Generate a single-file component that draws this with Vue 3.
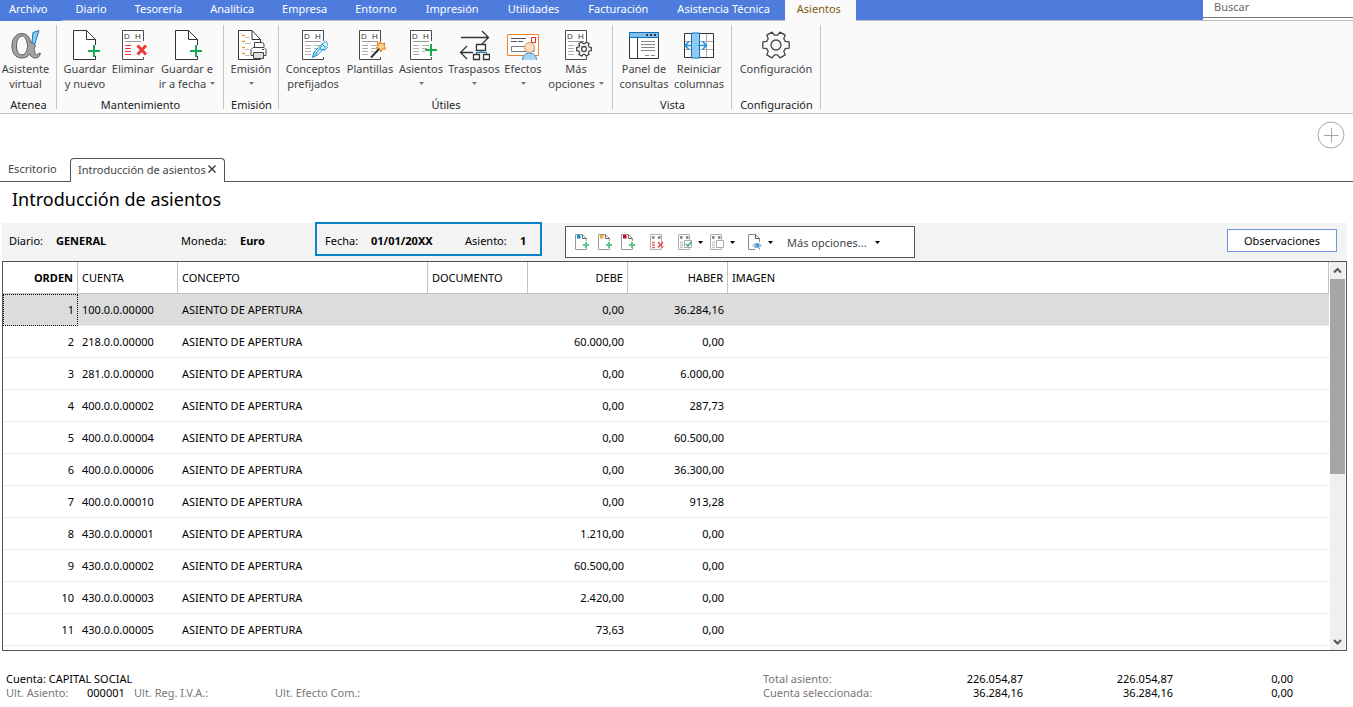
<script setup>
const menu = ['Archivo', 'Diario', 'Tesorería', 'Analítica', 'Empresa', 'Entorno', 'Impresión', 'Utilidades', 'Facturación', 'Asistencia Técnica', 'Asientos']

const groups = [
  { id: 'atenea', label: 'Atenea', items: [{ icon: 'alpha', lines: ['Asistente', 'virtual'] }] },
  { id: 'mantenimiento', label: 'Mantenimiento', items: [
    { icon: 'docplus', lines: ['Guardar', 'y nuevo'] },
    { icon: 'delete', lines: ['Eliminar'] },
    { icon: 'docplus', lines: ['Guardar e', 'ir a fecha'], caret: true },
  ] },
  { id: 'emision', label: 'Emisión', items: [{ icon: 'print', lines: ['Emisión', ''], caret: true }] },
  { id: 'utiles', label: 'Útiles', items: [
    { icon: 'pen', lines: ['Conceptos', 'prefijados'] },
    { icon: 'wand', lines: ['Plantillas'] },
    { icon: 'entry', lines: ['Asientos', ''], caret: true },
    { icon: 'transfer', lines: ['Traspasos', ''], caret: true },
    { icon: 'effects', lines: ['Efectos', ''], caret: true },
    { icon: 'more', lines: ['Más', 'opciones'], caret: true },
  ] },
  { id: 'vista', label: 'Vista', items: [
    { icon: 'panel', lines: ['Panel de', 'consultas'] },
    { icon: 'columns', lines: ['Reiniciar', 'columnas'] },
  ] },
  { id: 'config', label: 'Configuración', items: [{ icon: 'gear', lines: ['Configuración'] }] },
]

const ledger = ['delete', 'pen', 'wand', 'entry', 'more']

function gear(cx, cy, outer, inner) {
  const pts = []
  for (let i = 0; i < 6; i++) {
    const base = i * 60
    for (const [r, a] of [[inner, -21], [outer, -13], [outer, 13], [inner, 21]]) {
      const t = ((base + a) * Math.PI) / 180
      pts.push(`${(cx + r * Math.cos(t)).toFixed(2)} ${(cy + r * Math.sin(t)).toFixed(2)}`)
    }
  }
  return `M${pts.join('L')}Z`
}

const tools = [
  { kind: 'new', color: '#0a94dc', label: 'Nuevo apunte' },
  { kind: 'new', color: '#f5a623', label: 'Insertar apunte' },
  { kind: 'new', color: '#d0021b', label: 'Duplicar apunte' },
  { kind: 'remove', label: 'Borrar apunte' },
  { kind: 'check', label: 'Validar', caret: true },
  { kind: 'copy', label: 'Copiar', caret: true },
  { kind: 'view', label: 'Ver documento', caret: true },
]

const concept = 'ASIENTO DE APERTURA'
const rows = [
  ['100.0.0.00000', '0,00', '36.284,16'],
  ['218.0.0.00000', '60.000,00', '0,00'],
  ['281.0.0.00000', '0,00', '6.000,00'],
  ['400.0.0.00002', '0,00', '287,73'],
  ['400.0.0.00004', '0,00', '60.500,00'],
  ['400.0.0.00006', '0,00', '36.300,00'],
  ['400.0.0.00010', '0,00', '913,28'],
  ['430.0.0.00001', '1.210,00', '0,00'],
  ['430.0.0.00002', '60.500,00', '0,00'],
  ['430.0.0.00003', '2.420,00', '0,00'],
  ['430.0.0.00005', '73,63', '0,00'],
]
</script>

<template>
  <div class="app">
    <header class="topbar">
      <nav class="menu">
        <a v-for="m in menu" :key="m" href="#" :class="{ file: m === 'Archivo', current: m === 'Asientos' }">{{ m }}</a>
      </nav>
      <div class="search"><input type="text" placeholder="Buscar" aria-label="Buscar" /></div>
    </header>

    <section class="ribbon">
      <div v-for="g in groups" :key="g.id" class="group" :class="g.id">
        <div class="items">
          <button v-for="(it, i) in g.items" :key="i" type="button" class="item">
            <svg class="icon" width="32" height="32" viewBox="0 0 32 32" fill="none" aria-hidden="true">
              <g v-if="it.icon === 'alpha'">
                <path fill-rule="evenodd" d="M12 4.500C5.500 4.500 2 10 2 17C2 24 5.500 29 11.500 29C15.500 29 18 27.500 20 25C21 28 23 29 25.500 29C28 29 29.500 27.500 30.500 24.500L29 24C28.500 25.500 27.500 26 26.500 25.500C25 25 24.500 22.500 24 20L25.500 16.500L22 13L21 14C19.500 8 17 4.500 12 4.500ZM12.500 7C15.500 7 17 12 17.500 16.500C17.500 22 15 26 12 26C8.500 26 6.500 22 6.500 17C6.500 11 8.500 7 12.500 7Z" fill="#a3a3a3" stroke="#5a5a5a" />
                <path d="M23 3.500L29 1.500L24.500 16L22 13Z" fill="#8fcaf3" stroke="#1273b8" />
              </g>
              <g v-else-if="it.icon === 'docplus'">
                <path d="M26.500 16V10.500L17.500 1.500H4.500V30.500H26.500V27" fill="#fff" stroke="#333" />
                <path d="M17.500 1.500V10.500H26.500" stroke="#333" />
                <path d="M25 16V28M19 22H31" stroke="#18a950" stroke-width="2" />
              </g>
              <g v-else-if="ledger.includes(it.icon)">
                <path d="M26.500 12V1.500H5.500V30.500H26.500V28" fill="#fff" stroke="#4a4a4a" />
                <text class="letters" x="7" y="10">D</text>
                <text class="letters" x="18" y="10">H</text>
                <path d="M8 12.500H24" stroke="#999" />
                <path v-if="it.icon === 'delete'" d="M8 16.500H14M8 19.500H14M8 22.500H14M8 25.500H14" stroke="#e33" />
                <path v-else d="M8 16.500H14M8 19.500H14M8 22.500H14M8 25.500H14M17 16.500H24M17 19.500H22M17 22.500H20" stroke="#b0b0b0" />
                <path v-if="it.icon === 'delete'" d="M20.500 16.500L29 25.500M29 16.500L20.500 25.500" stroke="#ee3a3a" stroke-width="3" />
                <g v-else-if="it.icon === 'pen'" stroke="#1598d8">
                  <path d="M15.500 28.500L17 23L27 13.500C29 12 32 14 30 16.500L20.500 26Z" fill="#e4f5fd" />
                  <path d="M15.500 28.500L25 17M17 23L20.500 26M25 15L28 18M23 20L28 21L31 18" />
                </g>
                <g v-else-if="it.icon === 'wand'">
                  <path d="M17 28.500L25.500 19.500" stroke="#333" stroke-width="2" />
                  <path d="M26 12L28 15L31 14L30 17L32 20L28.500 20L27 23L25.500 19.500L22 19L24.500 17L23 13.500L26 15Z" fill="#fbd08b" stroke="#e87722" />
                </g>
                <path v-else-if="it.icon === 'entry'" d="M26 15V27M20 21H32" stroke="#18a950" stroke-width="2" />
                <g v-else>
                  <path :d="gear(24, 20, 7.5, 5.5)" fill="#fff" stroke="#444" stroke-width="1.3" stroke-linejoin="round" />
                  <circle cx="24" cy="20" r="2.500" stroke="#444" stroke-width="1.3" />
                </g>
              </g>
              <g v-else-if="it.icon === 'print'">
                <path d="M25.500 13V10.500L17 1.500H3.500V30.500H25.500" fill="#fff" stroke="#333" />
                <path d="M17 1.500V10.500H25.500" stroke="#333" />
                <path d="M7 6.500H10M7 12.500H10M7 18.500H10M7 24.500H10" stroke="#f39a1f" stroke-width="1.500" />
                <path d="M10 8.500H14M10 14.500H16M10 20.500H14M10 26.500H15" stroke="#bbb" />
                <path d="M19.500 18V13.500H27.500L29 15V18" fill="#fff" stroke="#444" />
                <path d="M18 18.500H29L31 20.500V26.500H16V20.500Z" fill="#fff" stroke="#444" />
                <path d="M18.500 23.500H28.500V29.500H18.500Z" fill="#ddd" stroke="#444" />
                <path d="M27 20.500H29" stroke="#444" />
              </g>
              <g v-else-if="it.icon === 'transfer'" stroke="#333">
                <path d="M3 8.500H30M24 2L30.500 8.500L24 15M15 23.500H2.500M9 17L2.500 23.500L9 30" stroke-width="1.3" />
                <path d="M18.500 23.500H28.500M23.500 21V23.500M18.500 23V26M28.500 23V26" stroke="#1d86cf" />
                <path d="M18.500 15.500H27.500V21.500H18.500ZM15.500 25.500H21.500V30.500H15.500ZM25.500 25.500H31.500V30.500H25.500Z" fill="#fff" stroke-width="1.3" />
              </g>
              <g v-else-if="it.icon === 'effects'">
                <path d="M.500 5.500H31.500V26.500H.500Z" fill="#fff" stroke="#ee8220" />
                <path d="M4 9.500H19M4 12.500H10M11 12.500H16" stroke="#555" />
                <path d="M24.500 8.500H28.500V13.500H24.500Z" stroke="#e22" />
                <path d="M4.500 17.500H27V22.500H4.500Z" stroke="#777" />
                <path d="M15.500 31C15.500 26 19 24 22.500 24S29.500 26 29.500 31" fill="#a8d3f2" stroke="#3a8fcc" />
                <circle cx="22.500" cy="18.500" r="5" fill="#fbdcbf" stroke="#c9986c" />
              </g>
              <g v-else-if="it.icon === 'panel'">
                <path d="M1.500 3.500H30.500V29.500H1.500Z" fill="#fff" stroke="#333" />
                <path d="M1.500 3.500H30.500V8.500H1.500Z" fill="#7fc0ef" stroke="#1370b5" />
                <path d="M9.500 9V29.500" stroke="#333" />
                <path d="M18 6H20M22 6H24M26 6H28" stroke="#333" stroke-width="2" />
                <path d="M13 12.500H27M13 15.500H27M13 18.500H27M13 21.500H27M17 26.500H21M23 26.500H27" stroke="#888" />
              </g>
              <g v-else-if="it.icon === 'columns'">
                <path d="M1.500 4.500H30.500V28.500H1.500Z" fill="#fff" stroke="#333" />
                <path d="M2 12.500H30M2 20.500H30M23.500 5V28" stroke="#aaa" />
                <path d="M8.500 4H16.500V29H8.500Z" fill="#8ecbf3" stroke="#1370b5" />
                <path d="M9 16.500H2.500M6 12.500L2 16.500L6 20.500M15 16.500H23M19.500 12.500L23.500 16.500L19.500 20.500" stroke="#1d8fd8" stroke-width="1.500" />
              </g>
              <g v-else stroke="#444" stroke-width="1.3" stroke-linejoin="round">
                <path :d="gear(16, 16, 13.5, 10)" />
                <circle cx="16" cy="16" r="5" />
              </g>
            </svg>
            <span v-for="(l, n) in it.lines" :key="n" class="line">{{ l }}<svg v-if="it.caret && n === 1" class="caret" width="5" height="3" viewBox="0 0 5 3" aria-hidden="true"><path d="M0 0H5L2.500 3Z" fill="#777" /></svg></span>
          </button>
        </div>
        <div class="glabel">{{ g.label }}</div>
      </div>
    </section>

    <div class="tabs">
      <a href="#" class="tab">Escritorio</a>
      <div class="tab active">
        <a href="#">Introducción de asientos</a>
        <button type="button" aria-label="Cerrar pestaña"><svg width="8" height="8" viewBox="0 0 8 8"><path d="M.500 .500L7.500 7.500M7.500 .500L.500 7.500" stroke="#333" stroke-width="1.400" /></svg></button>
      </div>
      <button type="button" class="add" aria-label="Añadir pestaña"><svg width="28" height="28" viewBox="0 0 28 28" fill="none" stroke="#a8a8a8"><circle cx="14" cy="14" r="13" /><path d="M14.500 7V21.500M7 14.500H21.500" /></svg></button>
    </div>

    <main>
      <h1>Introducción de asientos</h1>
      <div class="bar">
        <div class="fields">
          <span>Diario:</span><b>GENERAL</b><span>Moneda:</span><b>Euro</b>
        </div>
        <div class="datebox">
          <span>Fecha:</span><b>01/01/20XX</b><span>Asiento:</span><b>1</b>
        </div>
        <div class="tools">
          <button v-for="t in tools" :key="t.label" type="button" :aria-label="t.label">
            <svg width="16" height="18" viewBox="0 0 16 18" fill="none" aria-hidden="true">
              <g v-if="t.kind === 'new'">
                <path d="M12.500 8V5.500L8.500 1.500H1.500V16.500H12.500V15" fill="#fff" stroke="#999" />
                <path d="M8.500 1.500V5.500H12.500" stroke="#666" />
                <path d="M3 2H6.500V5.500H3Z" :fill="t.color" />
                <path d="M12 9V15M9 12H15" stroke="#5bc78a" stroke-width="2" />
              </g>
              <g v-else-if="t.kind === 'view'">
                <path d="M12.500 9V5.500L8.500 1.500H1.500V16.500H8M12.500 15V16.500" stroke="#888" />
                <path d="M8.500 1.500V5.500H12.500" stroke="#555" />
                <path d="M6 12.500C8 9.500 12 9.500 14.500 12.500C12 15.500 8 15.500 6 12.500Z" fill="#b9d6ec" stroke="#8ab4d4" />
                <circle cx="10.300" cy="12.500" r="2" fill="#4f97cc" />
              </g>
              <g v-else>
                <path d="M1.500 1.500H12.500V16.500H1.500Z" fill="#fff" stroke="#b0b0b0" />
                <path d="M3 4.500H5.500M9 4.500H11.500" stroke="#777" stroke-width="2.500" />
                <path d="M3 9.500H6M3 12H6M3 14.500H6" :stroke="t.kind === 'remove' ? '#ee6b6b' : '#c2c2c2'" stroke-width="1.300" />
                <path v-if="t.kind === 'remove'" d="M9 9L14 14.500M14 9L9 14.500" stroke="#ee4a4a" stroke-width="1.500" />
                <path v-else d="M7.500 7.500H14.500V14.500H7.500Z" fill="#fff" stroke="#aaa" />
                <path v-if="t.kind === 'check'" d="M9 11L11 13L14 9" stroke="#35b56a" stroke-width="1.500" />
              </g>
            </svg>
            <svg v-if="t.caret" class="arrow" width="5" height="3" viewBox="0 0 5 3" aria-hidden="true"><path d="M0 0H5L2.500 3Z" fill="#000" /></svg>
          </button>
          <button type="button" class="moreopt">Más opciones...<svg class="arrow" width="5" height="3" viewBox="0 0 5 3" aria-hidden="true"><path d="M0 0H5L2.500 3Z" fill="#000" /></svg></button>
        </div>
        <button type="button" class="obs">Observaciones</button>
      </div>

      <div class="frame">
        <table>
          <colgroup><col class="c-first" /><col class="c-mid" /><col class="c-wide" /><col class="c-mid" /><col class="c-mid" /><col class="c-mid" /><col /></colgroup>
          <thead>
            <tr><th class="num order">ORDEN</th><th>CUENTA</th><th>CONCEPTO</th><th>DOCUMENTO</th><th class="num">DEBE</th><th class="num">HABER</th><th>IMAGEN</th></tr>
          </thead>
          <tbody>
            <tr v-for="(r, i) in rows" :key="i" :class="{ selected: i === 0 }">
              <td class="num">{{ i + 1 }}</td><td>{{ r[0] }}</td><td>{{ concept }}</td><td></td><td class="num">{{ r[1] }}</td><td class="num">{{ r[2] }}</td><td></td>
            </tr>
          </tbody>
        </table>
        <div class="scroll" aria-hidden="true">
          <svg width="15" height="17" viewBox="0 0 15 17"><path d="M4 10.500L7.500 7L11 10.500" fill="none" stroke="#555" stroke-width="2" /></svg>
          <div class="track"><div class="thumb"></div></div>
          <svg width="15" height="17" viewBox="0 0 15 17"><path d="M4 7L7.500 10.500L11 7" fill="none" stroke="#555" stroke-width="2" /></svg>
        </div>
      </div>
    </main>

    <footer>
      <div class="info">
        <div>Cuenta: CAPITAL SOCIAL</div>
        <div class="last"><span>Ult. Asiento:</span><em>000001</em><span>Ult. Reg. I.V.A.:</span><span>Ult. Efecto Com.:</span></div>
      </div>
      <table class="totals">
        <tbody>
          <tr><th>Total asiento:</th><td>226.054,87</td><td>226.054,87</td><td>0,00</td></tr>
          <tr><th>Cuenta seleccionada:</th><td>36.284,16</td><td>36.284,16</td><td>0,00</td></tr>
        </tbody>
      </table>
    </footer>
  </div>
</template>

<style>
body { background: #fff; }
</style>

<style scoped>
.app { font-family: "Noto Sans", "Open Sans", sans-serif; font-size: 11px; line-height: 15px; color: #000; }
* { box-sizing: border-box; }
a { color: inherit; text-decoration: none; }
button { font: inherit; color: inherit; border: 0; background: none; padding: 0; margin: 0; }
svg { display: block; flex: none; }

.topbar { display: flex; height: 21px; border-bottom: 1px solid #c0c0c0; }
.menu { flex: 1; display: flex; height: 20px; background: #4d7cdc; color: #fff; }
.menu a { padding: 0 14px; height: 20px; line-height: 17px; white-space: nowrap; }
.menu a:nth-child(n+6) { padding-right: 15px; }
.menu .file { padding-left: 9px; height: 21px; background: #4d7cdc; }
.menu .current { height: 21px; padding: 0 12px; background: #fafafa; color: #7d5a12; }
.search { width: 150px; height: 18px; border-bottom: 1px solid #777; }
.search input { display: block; width: 100%; height: 12px; padding: 0 11px; border: 0; outline: 0; background: none; font: inherit; color: #666; }
.search input::placeholder { color: #666; opacity: 1; }

.ribbon { display: flex; height: 93px; background: #fafafa; border-bottom: 1px solid #c0c0c0; }
.group { position: relative; padding-top: 8px; color: #444; }
.group::after { content: ""; position: absolute; right: 0; top: 4px; bottom: 4px; width: 1px; background: #c6c6c6; }
.items { display: grid; height: 68px; justify-content: start; }
.atenea { width: 57px; } .atenea .items { grid-template-columns: 51px; }
.mantenimiento { width: 167px; } .mantenimiento .items { grid-template-columns: 56px 40px 68px; }
.emision { width: 55px; } .emision .items { grid-template-columns: 54px; }
.utiles { width: 334px; } .utiles .items { grid-template-columns: 68px 46px 56px 50px 48px 58px; }
.vista { width: 119px; } .vista .items { grid-template-columns: 62px 48px; }
.config { width: 89px; } .config .items { grid-template-columns: 88px; }
.item { display: flex; flex-direction: column; align-items: center; white-space: nowrap; }
.letters { font: 8px "Liberation Sans", sans-serif; fill: #333; }
.line { display: flex; align-items: center; justify-content: center; gap: 4px; height: 15px; }
.glabel { text-align: center; color: #222; }

.tabs { position: relative; display: flex; align-items: flex-end; height: 68px; border-bottom: 1px solid #555; color: #444; }
.tab { width: 70px; padding: 0 8px; height: 20px; }
.tab.active { display: flex; align-items: center; justify-content: space-between; width: 155px; height: 24px; margin-bottom: -1px; padding: 0 8px 3px 7px; border: 1px solid #555; border-bottom: 0; border-radius: 4px 4px 0 0; background: #fff; white-space: nowrap; }
.add { position: absolute; right: 8px; top: 7px; }

main { padding: 0 6px 0 2px; }
h1 { margin: 0; padding: 5px 10px 0; height: 41px; font-size: 18px; line-height: 24px; font-weight: 400; }
.bar { display: flex; align-items: flex-start; height: 38px; background: #f3f3f3; }
.fields { display: grid; grid-template-columns: 47px 125px 59px 75px; padding: 10px 0 0 7px; }
.datebox { display: grid; grid-template-columns: 46px 94px 55px 20px; width: 227px; height: 34px; margin-top: -1px; padding: 9px 0 0 8px; border: 2px solid #0a84c6; }
.tools { display: grid; grid-template-columns: 23px 23px 29px 28px 32px 38px 40px auto; align-items: center; width: 350px; height: 32px; margin: 3px 0 0 23px; padding-left: 8px; border: 1px solid #555; background: #fff; color: #444; }
.tools button { display: flex; align-items: center; gap: 5px; }
.tools .moreopt { gap: 8px; }
.obs { width: 110px; height: 23px; margin: 6px 10px 0 auto; border: 1px solid #6f94e0; background: #fff; }

.frame { display: flex; border: 1px solid #555; }
.frame table { flex: 1; table-layout: fixed; border-collapse: separate; border-spacing: 0; margin-bottom: 4px; }
.c-first { width: 75px; } .c-mid { width: 100px; } .c-wide { width: 250px; }
th, td { text-align: left; font-weight: 400; }
.frame th, .frame td { height: 32px; padding: 0 4px; }
.frame th { border-right: 1px solid #c3c3c3; border-bottom: 1px solid #c3c3c3; }
.frame td { border-bottom: 1px solid #ebebeb; }
.frame .num { text-align: right; }
.frame .order { font-weight: 700; }
.selected td { background: #dcdcdc; }
.selected td:first-child { outline: 1px dotted #000; outline-offset: -1px; }
.scroll { display: flex; flex-direction: column; width: 17px; padding: 0 1px; background: #efefef; background-clip: content-box; }
.track { flex: 1; }
.thumb { height: 55%; background: #a6a6a6; }

footer { display: flex; justify-content: space-between; padding: 21px 60px 0 6px; line-height: 14px; }
.last { display: grid; grid-template-columns: 81px 47px 141px auto; color: #777; }
.last em { font-style: normal; color: #000; }
.totals { table-layout: fixed; width: 530px; border-collapse: collapse; }
.totals th, .totals td { padding: 0; }
.totals th { width: 110px; color: #777; }
.totals td { width: 150px; text-align: right; }
.totals td:last-child { width: 120px; }
</style>
